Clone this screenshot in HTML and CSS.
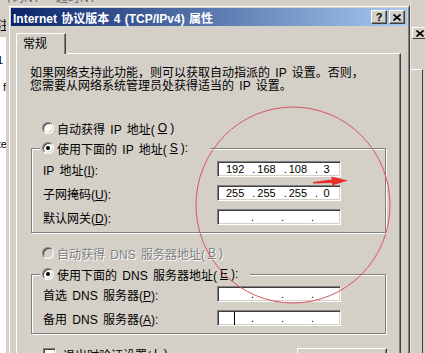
FILE: index.html
```html
<!DOCTYPE html>
<html lang="zh-CN">
<head>
  <meta charset="UTF-8" />
  <title>Internet 协议版本 4 (TCP/IPv4) 属性</title>
  <link rel="stylesheet" href="styles.css">
</head>
<body>
<div class="desk">

  <!-- windows behind the dialog -->
  <div class="bg-top"><span>号码NT</span><span>超时NT</span></div>
  <div class="bg-left">
    <div class="frag frag-a">地址注</div>
    <div class="frag frag-b">1</div>
    <div class="frag frag-c">f</div>
    <div class="frag frag-d">te</div>
  </div>
  <div class="bg-right">
    <div class="bg-x">
      <svg width="8" height="7" viewBox="0 0 8 7"><path d="M0.5 0.5 L7.5 6.5 M7.5 0.5 L0.5 6.5" stroke="#000" stroke-width="1.6" fill="none"/></svg>
    </div>
    <div class="bg-pane"></div>
  </div>

  <div class="dialog">
    <div class="titlebar">
      <span class="title">Internet 协议版本 4 (TCP/IPv4) 属性</span>
      <span class="caps">
        <span class="cap cap-help">?</span>
        <span class="cap">
          <svg width="8" height="7" viewBox="0 0 8 7"><path d="M0.5 0.5 L7.5 6.5 M7.5 0.5 L0.5 6.5" stroke="#000" stroke-width="1.6" fill="none"/></svg>
        </span>
      </span>
    </div>

    <div class="tabs"><div class="tab">常规</div></div>

    <div class="panel">
      <p class="intro">如果网络支持此功能，则可以获取自动指派的 IP 设置。否则，<br>您需要从网络系统管理员处获得适当的 IP 设置。</p>

      <div class="opt opt-first"><span class="radio"></span>自动获得 IP 地址(<u>O</u>)</div>

      <fieldset class="group">
        <legend class="legend-ip"><div class="opt"><span class="radio on"></span>使用下面的 IP 地址(<u>S</u>):</div></legend>
        <div class="row">
          <span class="lbl">IP 地址(<u>I</u>):</span>
          <div class="ip">
            <span class="seg"><span class="dot"></span><span class="num">192</span></span>
            <span class="seg"><span class="dot">.</span><span class="num">168</span></span>
            <span class="seg"><span class="dot">.</span><span class="num">108</span></span>
            <span class="seg"><span class="dot">.</span><span class="num">3</span></span>
          </div>
        </div>
        <div class="row">
          <span class="lbl">子网掩码(<u>U</u>):</span>
          <div class="ip">
            <span class="seg"><span class="dot"></span><span class="num">255</span></span>
            <span class="seg"><span class="dot">.</span><span class="num">255</span></span>
            <span class="seg"><span class="dot">.</span><span class="num">255</span></span>
            <span class="seg"><span class="dot">.</span><span class="num">0</span></span>
          </div>
        </div>
        <div class="row">
          <span class="lbl">默认网关(<u>D</u>):</span>
          <div class="ip">
            <span class="seg"><span class="dot"></span><span class="num"></span></span>
            <span class="seg"><span class="dot">.</span><span class="num"></span></span>
            <span class="seg"><span class="dot">.</span><span class="num"></span></span>
            <span class="seg"><span class="dot">.</span><span class="num"></span></span>
          </div>
        </div>
      </fieldset>

      <div class="opt opt-off"><span class="radio off"></span>自动获得 DNS 服务器地址(<u>B</u>)</div>

      <fieldset class="group group-dns">
        <legend class="legend-dns"><div class="opt"><span class="radio on"></span>使用下面的 DNS 服务器地址(<u>E</u>):</div></legend>
        <div class="row">
          <span class="lbl">首选 DNS 服务器(<u>P</u>):</span>
          <div class="ip">
            <span class="seg"><span class="dot"></span><span class="num"></span></span>
            <span class="seg"><span class="dot">.</span><span class="num"></span></span>
            <span class="seg"><span class="dot">.</span><span class="num"></span></span>
            <span class="seg"><span class="dot">.</span><span class="num"></span></span>
          </div>
        </div>
        <div class="row">
          <span class="lbl">备用 DNS 服务器(<u>A</u>):</span>
          <div class="ip">
            <span class="seg"><span class="dot"></span><span class="num"><span class="caret"></span></span></span>
            <span class="seg"><span class="dot">.</span><span class="num"></span></span>
            <span class="seg"><span class="dot">.</span><span class="num"></span></span>
            <span class="seg"><span class="dot">.</span><span class="num"></span></span>
          </div>
        </div>
      </fieldset>

      <div class="check-row">
        <div class="opt"><span class="checkbox"></span>退出时验证设置(<u>L</u>)</div>
        <span class="btn">高级(<u>V</u>)...</span>
      </div>
    </div>
  </div>

  <!-- red marks drawn on the screenshot -->
  <svg class="marks" width="425" height="353" viewBox="0 0 425 353">
    <ellipse cx="293" cy="205" rx="97" ry="98" fill="none" stroke="#d9535e" stroke-width="1"/>
    <polygon points="313,182 332,179.5 331,176.5 348,180.5 332,185.5 332,183 313,183.5" fill="#e8302a"/>
  </svg>
</div>
</body>
</html>
```

FILE: styles.css
```css
* {
  box-sizing: border-box;
}
body {
  margin: 0;
  background: #d4d0c8;
  font-family: "Liberation Sans", "Noto Sans CJK SC", sans-serif;
  font-size: 12px;
  color: #000;
}
u {
  text-decoration: underline;
}
.desk {
  position: relative;
  width: 425px;
  height: 353px;
  overflow: hidden;
  background: #d4d0c8;
}

/* background windows */
.bg-top {
  position: absolute;
  left: 0;
  top: -8px;
  display: flex;
  gap: 16px;
  color: #6a6a6a;
  line-height: 13px;
  white-space: nowrap;
}
.bg-left {
  position: absolute;
  left: 0;
  top: 0;
  width: 8px;
  height: 353px;
  overflow: hidden;
  background: linear-gradient(#d4d0c8 37px, #fff 37px);
  border-right: 2px solid #d4d0c8;
  font-size: 11px;
  line-height: 13px;
}
.frag {
  display: flex;
  justify-content: flex-end;
  white-space: nowrap;
  height: 13px;
}
.frag-a {
  margin-top: 20px;
  font-size: 12px;
  margin-right: -3px;
}
.frag-b {
  margin-top: 21px;
  margin-right: 3px;
}
.frag-c {
  margin-top: 14px;
}
.frag-d {
  margin-top: 44px;
  margin-right: -1px;
}
.bg-right {
  position: absolute;
  left: 410px;
  top: 0;
  width: 15px;
  height: 353px;
  background: #d4d0c8;
  border-left: 1px solid #e8e6e2;
}
.bg-x {
  margin: 27px 0 0 1px;
  width: 16px;
  height: 12px;
  display: flex;
  align-items: center;
  justify-content: center;
  border: 1px solid;
  border-color: #fff #404040 #404040 #fff;
}
.bg-pane {
  margin-top: 30px;
  width: 12px;
  height: 300px;
  border-top: 1px solid #fff;
  border-right: 1px solid #404040;
}

/* dialog */
.dialog {
  position: absolute;
  left: 8px;
  top: 5px;
  width: 402px;
  height: 360px;
  padding: 2px;
  background: #d4d0c8;
  border: 1px solid;
  border-color: #d4d0c8 #404040 #404040 #d4d0c8;
  box-shadow: inset 1px 1px #fff, inset -1px -1px #808080;
}
.titlebar {
  height: 18px;
  display: flex;
  align-items: center;
  justify-content: space-between;
  padding: 0 2px 0 2px;
  background: linear-gradient(to right, #0a246a, #a6caf0);
}
.title {
  color: #fff;
  font-weight: bold;
  font-size: 12px;
  white-space: nowrap;
  word-spacing: 1px;
}
.caps {
  display: flex;
  gap: 2px;
}
.cap {
  width: 16px;
  height: 14px;
  display: flex;
  align-items: center;
  justify-content: center;
  background: #d4d0c8;
  border: 1px solid;
  border-color: #fff #404040 #404040 #fff;
  box-shadow: inset -1px -1px #808080;
}
.cap-help {
  font-weight: bold;
  font-size: 11px;
  line-height: 12px;
}

.tabs {
  margin: 7px 0 0 5px;
  height: 20px;
  display: flex;
}
.tab {
  position: relative;
  z-index: 1;
  width: 50px;
  height: 21px;
  padding: 3px 0 0 6px;
  line-height: 14px;
  background: #d4d0c8;
  border-top: 1px solid #fff;
  border-left: 1px solid #fff;
  border-right: 1px solid #404040;
  border-top-left-radius: 2px;
  box-shadow: inset -1px 0 #808080;
}
.panel {
  margin-left: 5px;
  width: 385px;
  height: 320px;
  padding: 13px 0 0 13px;
  border: 1px solid;
  border-color: #fff #404040 #404040 #fff;
  box-shadow: inset -1px -1px #808080;
  word-spacing: 2px;
}
.intro {
  margin: 0;
  line-height: 13px;
  white-space: nowrap;
}

/* radio and check options */
.opt {
  display: flex;
  align-items: center;
  gap: 3px;
  height: 16px;
  white-space: nowrap;
}
.opt-first {
  margin: 27px 0 0 12px;
}
.opt-off {
  margin: 12px 0 0 12px;
  color: #808080;
  text-shadow: 1px 1px #fff;
}
.radio {
  position: relative;
  width: 12px;
  height: 12px;
  border-radius: 50%;
  background: #fff;
  border: 1px solid;
  border-color: #808080 #fff #fff #808080;
  box-shadow: inset 1px 1px #404040, inset -1px -1px #d4d0c8;
}
.radio.on::after {
  content: "";
  position: absolute;
  left: 3px;
  top: 3px;
  width: 4px;
  height: 4px;
  border-radius: 50%;
  background: #000;
}
.radio.off {
  background: #d4d0c8;
}
.checkbox {
  width: 13px;
  height: 13px;
  margin-right: 4px;
  background: #fff;
  border: 1px solid;
  border-color: #808080 #fff #fff #808080;
  box-shadow: inset 1px 1px #404040, inset -1px -1px #d4d0c8;
}

/* group boxes */
.group {
  margin: 4px 0 0 1px;
  width: 355px;
  padding: 5px 0 7px 11px;
  border: 1px solid #808080;
  box-shadow: inset 1px 1px #fff, 1px 1px #fff;
}
.group-dns {
  margin-top: 5px;
  padding-top: 4px;
}
.group legend {
  margin-left: -3px;
  padding: 0 0 0 2px;
  background: #d4d0c8;
}
.legend-ip {
  width: 170px;
}
.legend-dns {
  width: 210px;
}
.row {
  display: flex;
  align-items: center;
  height: 16px;
}
.row + .row {
  margin-top: 8px;
}
.lbl {
  width: 174px;
  white-space: nowrap;
}
.ip {
  width: 124px;
  height: 16px;
  display: grid;
  grid-template-columns: repeat(4, 1fr);
  background: #fff;
  border: 1px solid;
  border-color: #808080 #fff #fff #808080;
  box-shadow: inset 1px 1px #404040, inset -1px -1px #d4d0c8;
  padding: 1px;
  font-size: 11px;
  line-height: 12px;
  word-spacing: 0;
}
.seg {
  display: flex;
}
.dot {
  width: 7px;
  text-align: center;
}
.num {
  flex: 1;
  padding-right: 6px;
  text-align: center;
  white-space: nowrap;
  display: flex;
  justify-content: center;
  align-items: center;
}
.caret {
  width: 1px;
  height: 13px;
  background: #000;
}

.check-row {
  display: flex;
  justify-content: space-between;
  align-items: flex-start;
  margin: 12px 0 0 13px;
  width: 344px;
}
.btn {
  margin-top: 2px;
  width: 90px;
  height: 23px;
  display: flex;
  align-items: center;
  justify-content: center;
  background: #d4d0c8;
  border: 1px solid;
  border-color: #fff #404040 #404040 #fff;
  box-shadow: inset -1px -1px #808080;
}

.marks {
  position: absolute;
  left: 0;
  top: 0;
  pointer-events: none;
}
```
